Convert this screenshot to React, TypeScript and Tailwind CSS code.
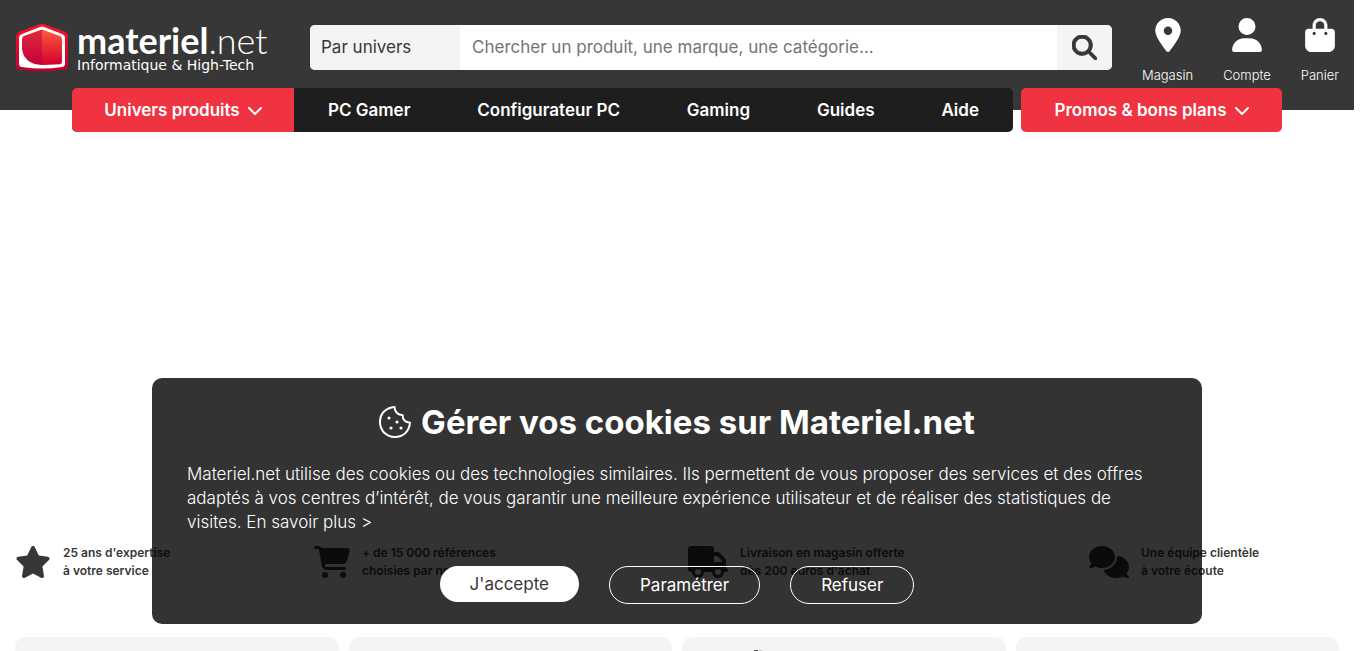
import type { ReactNode } from "react";
import { FaBagShopping, FaCartShopping, FaComments, FaLocationDot, FaMagnifyingGlass, FaStar, FaTruck, FaUser } from "react-icons/fa6";

const navLinks = ["PC Gamer", "Configurateur PC", "Gaming", "Guides", "Aide"];

const services = [
  { icon: <FaStar className="h-8 w-9" />, lines: ["25 ans d'expertise", "à votre service"] },
  { icon: <FaCartShopping className="h-8 w-9" />, lines: ["+ de 15 000 références", "choisies par nos experts"] },
  { icon: <FaTruck className="h-8 w-10" />, lines: ["Livraison en magasin offerte", "dès 200 euros d'achat"] },
  { icon: <FaComments className="h-8 w-10" />, lines: ["Une équipe clientèle", "à votre écoute"] },
];

function Logo() {
  return (
    <a href="#" className="flex w-[295px] shrink-0 items-center gap-2 text-white">
      <svg viewBox="0 0 54 50" className="h-[50px] w-[54px] shrink-0">
        <defs>
          <linearGradient id="edge" x1="0" y1="0" x2="0" y2="1">
            <stop offset="0" stopColor="#ff1028" />
            <stop offset="1" stopColor="#c00030" />
          </linearGradient>
          <linearGradient id="left" x1="0" y1="0" x2="0" y2="1">
            <stop offset="0" stopColor="#e02a3c" />
            <stop offset="1" stopColor="#c4003c" />
          </linearGradient>
          <linearGradient id="right" x1="0" y1="0" x2="0" y2="1">
            <stop offset="0" stopColor="#ff5a3c" />
            <stop offset="1" stopColor="#d2002f" />
          </linearGradient>
        </defs>
        <path d="M24 1.500Q27 .5 30 1.500L49 8.500Q53 10 53 14V42Q53 46 49 46.700Q27 50 5 46.700Q1 46 1 42V14Q1 10 5 8.500Z" fill="url(#edge)" />
        <path d="M25 4Q27 3.200 29 4L47 11Q50 12 50 15V41Q50 43.500 47 44Q27 47 7 44Q4 43.500 4 41V15Q4 12 7 11Z" fill="#fff" />
        <path d="M27 6.500L9 13Q7 14 7 16V26Q9 41 27 42Z" fill="url(#left)" />
        <path d="M27 6.500L45 13Q47 14 47 16V39Q47 41 45 41.200L27 42Z" fill="url(#right)" />
      </svg>
      <span className="flex flex-col whitespace-nowrap">
        <span className="font-['Lato',sans-serif] text-[36px] leading-[34px] font-bold">
          materiel<span className="font-light">.net</span>
        </span>
        <span className="font-['DejaVu_Sans',sans-serif] text-[14px] leading-4">Informatique &amp; High-Tech</span>
      </span>
    </a>
  );
}

function HeaderLink({ icon, label }: { icon: ReactNode; label: string }) {
  return (
    <a href="#" className="flex flex-col items-center gap-[14px] text-white">
      {icon}
      <span className="text-[13px] leading-[18px] font-light">{label}</span>
    </a>
  );
}

function ChevronDown() {
  return (
    <svg viewBox="0 0 14 8" className="h-2 w-[14px]" fill="none" stroke="currentColor" strokeWidth="2" strokeLinecap="round" strokeLinejoin="round">
      <path d="M1 1l6 6 6-6" />
    </svg>
  );
}

function CookieIcon() {
  return (
    <svg viewBox="0 0 32 32" className="size-8" fill="none" stroke="currentColor" strokeWidth="2" strokeLinejoin="round">
      <path d="M15.500 1Q9 1.500 4.500 6Q1 10 1 16Q1 22 5 26.500Q9.500 31 16 31Q22 31 26.500 27Q30.500 23 31 16.700Q27.500 16.500 25.500 14.500Q23.500 12.500 23.700 9.200Q20 9 18 7Q15.700 4.500 15.500 1Z" />
      <g fill="currentColor" stroke="none">
        <circle cx="10" cy="12" r="1.600" />
        <circle cx="18" cy="16" r="1.600" />
        <circle cx="12" cy="22" r="1.600" />
        <circle cx="22" cy="22" r="1.600" />
      </g>
    </svg>
  );
}

function CookieBanner() {
  return (
    <div
      role="dialog"
      aria-labelledby="cookie-title"
      className="absolute inset-x-0 bottom-[27px] mx-auto flex max-w-[1050px] flex-col rounded-[10px] bg-black/80 px-[35px] py-5 text-white"
    >
      <h2 id="cookie-title" className="flex items-center justify-center gap-[10px] text-[33px] leading-[48px] font-bold">
        <CookieIcon />
        Gérer vos cookies sur Materiel.net
      </h2>
      <p className="mt-4 text-[17px] leading-6 font-light">
        Materiel.net utilise des cookies ou des technologies similaires. Ils permettent de vous proposer des services et des offres
        adaptés à vos centres d’intérêt, de vous garantir une meilleure expérience utilisateur et de réaliser des statistiques de
        visites. <a href="#">En savoir plus &gt;</a>
      </p>
      <div className="mt-8 flex items-start justify-center gap-[30px] text-[17px]">
        <button className="h-9 rounded-full bg-white px-[30px] pt-0.5 text-[#373737]">J'accepte</button>
        <button className="h-[38px] rounded-full border border-white px-[30px] pt-0.5">Paramétrer</button>
        <button className="h-[38px] rounded-full border border-white px-[30px] pt-0.5">Refuser</button>
      </div>
    </div>
  );
}

export default function App() {
  return (
    <div className="h-screen overflow-hidden bg-white pr-3 font-['Inter',sans-serif] text-[#373737]">
      <div className="relative flex h-full flex-col">
        <header className="flex h-[110px] shrink-0 items-start bg-[#373737] px-[15px]">
          <div className="pt-[23px]">
            <Logo />
          </div>
          <form className="mt-[25px] flex h-[45px] min-w-0 flex-1 overflow-hidden rounded-[5px] bg-white text-[17px]">
            <select aria-label="Univers" className="w-[150px] appearance-none bg-[#f4f4f4] px-[11px]">
              <option>Par univers</option>
            </select>
            <input
              type="text"
              aria-label="Recherche"
              placeholder="Chercher un produit, une marque, une catégorie..."
              className="min-w-0 flex-1 px-3 placeholder:text-[#757575]"
            />
            <button type="button" aria-label="Rechercher" className="flex w-[55px] items-center justify-center bg-[#f4f4f4]">
              <FaMagnifyingGlass className="size-[25px]" stroke="currentColor" strokeWidth="20" />
            </button>
          </form>
          <div className="ml-[30px] flex gap-[30px] pt-[18px]">
            <HeaderLink icon={<FaLocationDot className="h-[34px] w-[30px]" />} label="Magasin" />
            <HeaderLink icon={<FaUser className="h-[34px] w-[30px]" />} label="Compte" />
            <HeaderLink icon={<FaBagShopping className="h-[34px] w-[30px]" />} label="Panier" />
          </div>
        </header>

        <nav className="z-10 mx-[72px] -mt-[22px] flex h-11 shrink-0 gap-2 text-[17px] font-semibold text-white">
          <div className="flex flex-1 overflow-hidden rounded-[5px] bg-[#1e1e1e]">
            <button className="flex w-[222px] items-center justify-center gap-2 bg-[#ef3340] pt-0.5">
              Univers produits
              <ChevronDown />
            </button>
            <div className="flex flex-1 items-center justify-between px-[34px] pt-0.5">
              {navLinks.map((link) => (
                <a key={link} href="#">
                  {link}
                </a>
              ))}
            </div>
          </div>
          <button className="flex w-[261px] items-center justify-center gap-2 rounded-[5px] bg-[#ef3340] pt-0.5">
            Promos &amp; bons plans
            <ChevronDown />
          </button>
        </nav>

        <main className="flex flex-1 flex-col px-[15px] pt-[412px]">
          <ul className="grid grid-cols-[299fr_374fr_401fr_250fr] text-xs leading-[18px] font-semibold">
            {services.map(({ icon, lines }) => (
              <li key={lines[0]} className="flex items-center gap-3 whitespace-nowrap">
                {icon}
                <span>
                  {lines[0]}
                  <br />
                  {lines[1]}
                </span>
              </li>
            ))}
          </ul>
          <div className="mt-[57px] grid flex-1 grid-cols-4 gap-[10px]">
            <div className="rounded-t-[10px] bg-[#f4f4f4]" />
            <div className="rounded-t-[10px] bg-[#f4f4f4]" />
            <div className="flex items-end rounded-t-[10px] bg-[#f4f4f4] pl-[72px]">
              <svg viewBox="0 0 8 1" className="h-px w-2">
                <path d="M0 0h4v1h-4z" fill="#555" />
                <path d="M5 0h3v1h-3z" fill="#ccc" />
              </svg>
            </div>
            <div className="rounded-t-[10px] bg-[#f4f4f4]" />
          </div>
        </main>

        <CookieBanner />
      </div>
    </div>
  );
}
